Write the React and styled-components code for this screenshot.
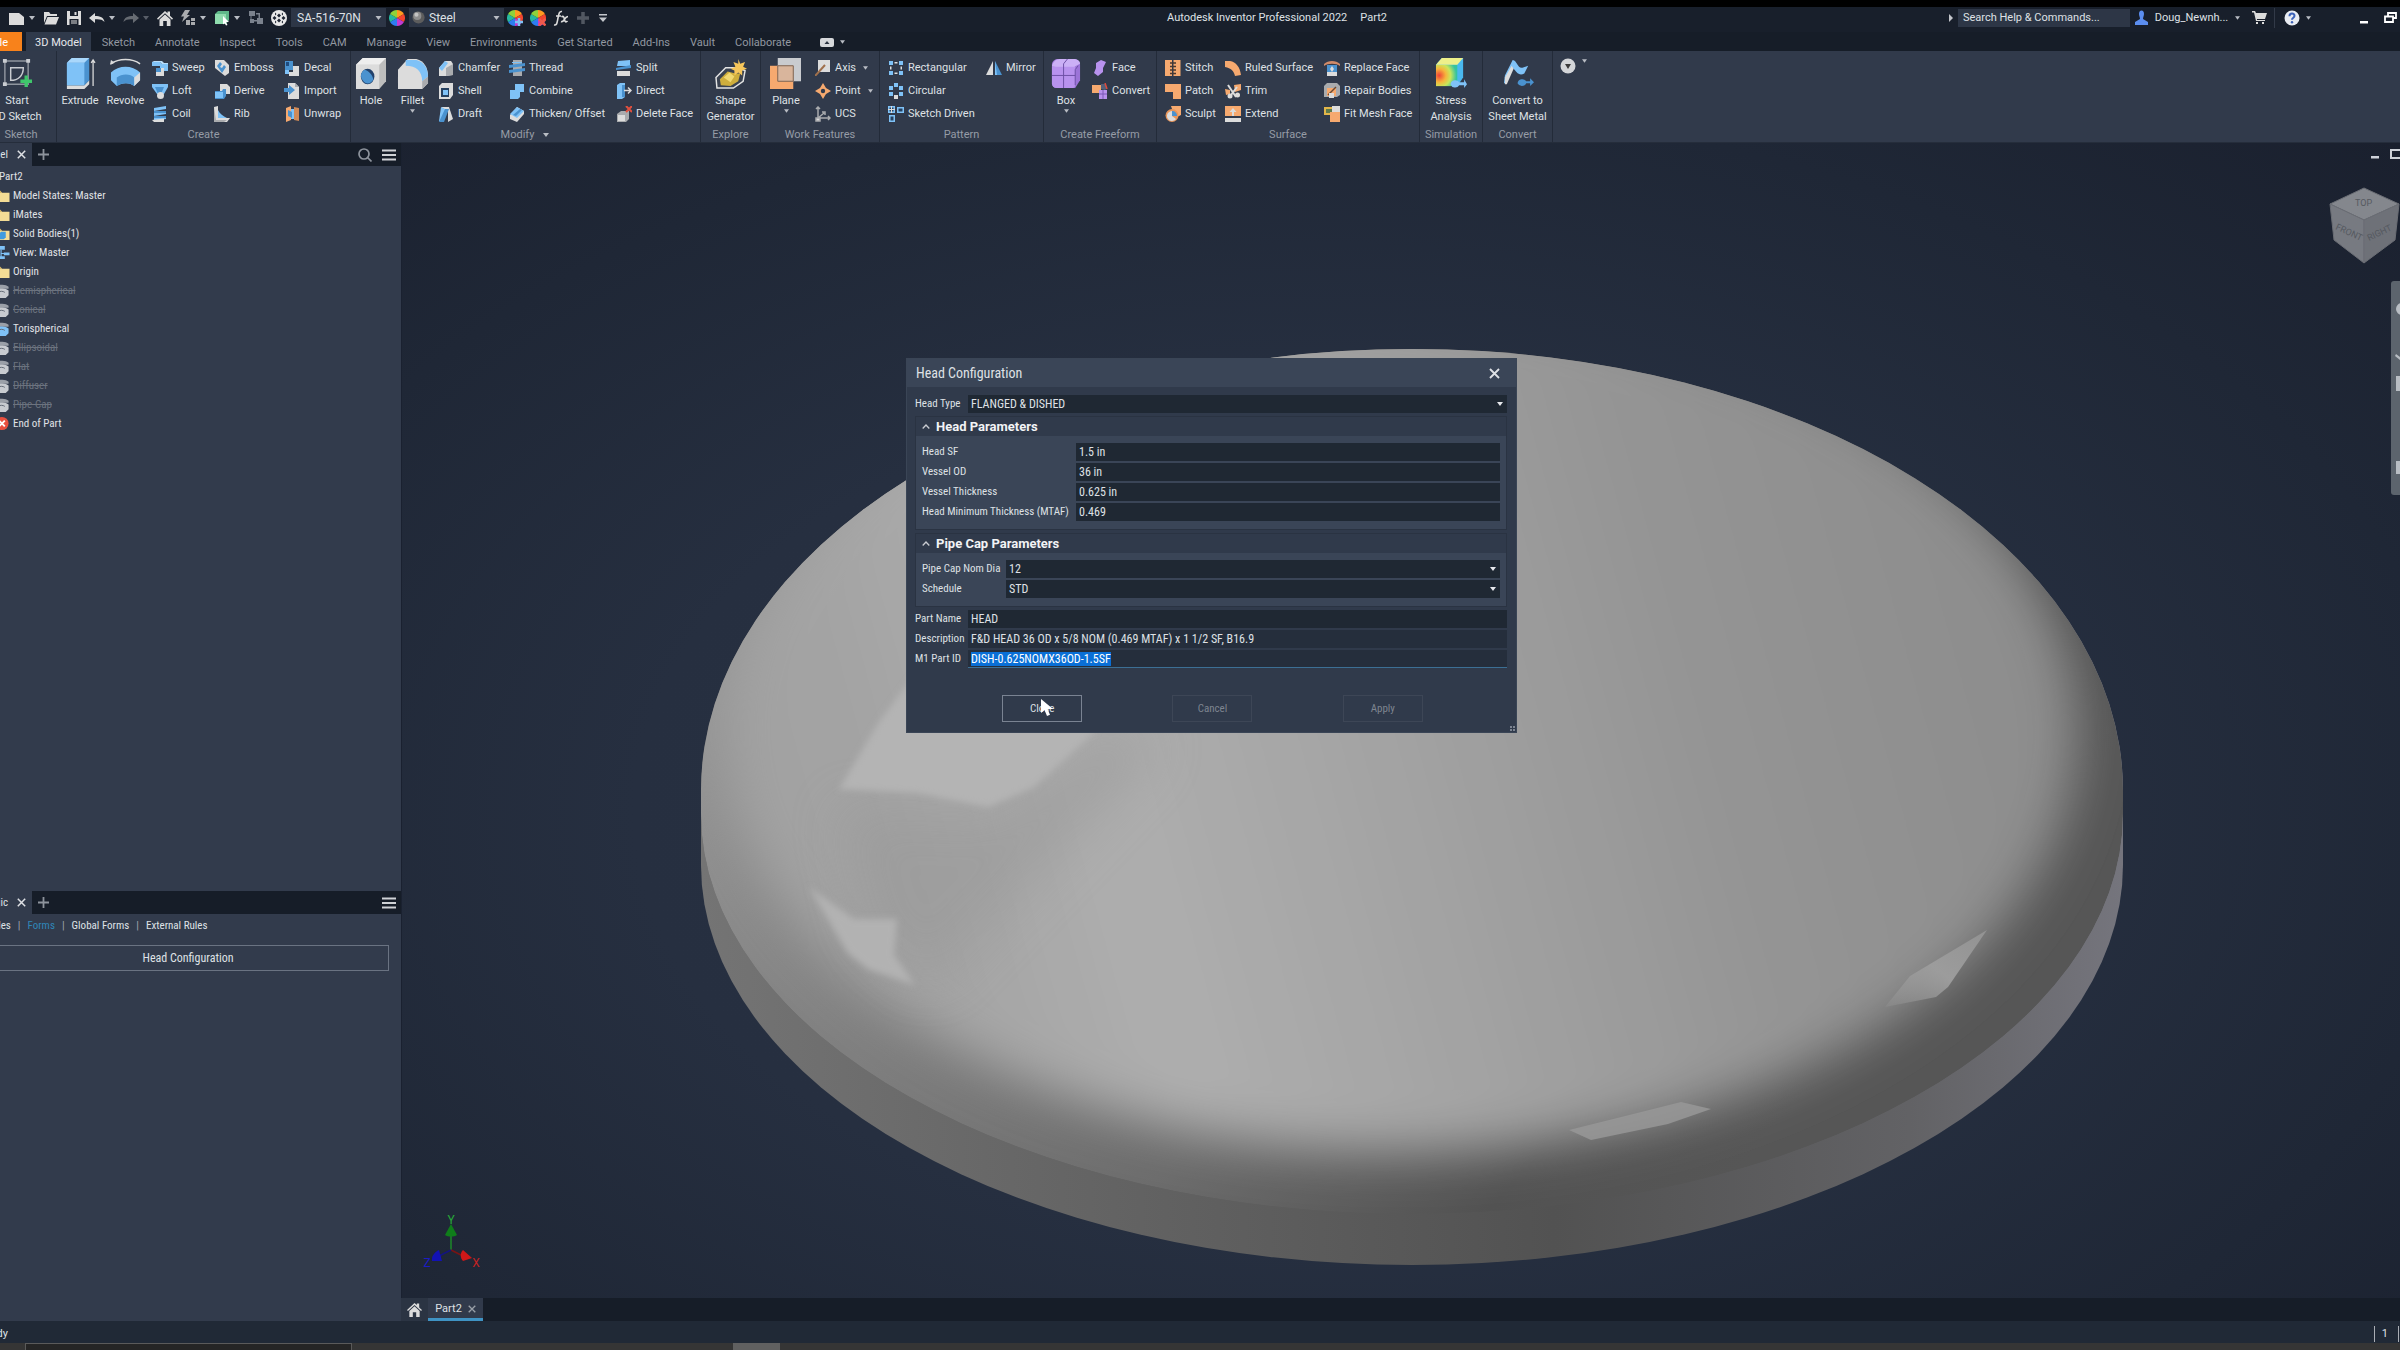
import React, { useEffect, useRef } from "react";
import styled, { createGlobalStyle } from "styled-components";

const ui = `Roboto, "Liberation Sans", sans-serif`;
const narrow = `"Roboto Condensed", "Liberation Sans Narrow", Roboto, sans-serif`;

const GlobalStyle = createGlobalStyle`
  * {
    box-sizing: border-box;
  }
  body {
    margin: 0;
    background: #000;
    color: #dfe1e5;
    font: 11px/16px ${ui};
    overflow: hidden;
  }
  button, input, select {
    font: inherit;
    color: inherit;
    margin: 0;
    padding: 0;
    border: none;
    border-radius: 0;
    background: none;
    outline: none;
  }
  svg {
    display: block;
    flex: none;
  }
`;

const Screen = styled.div`
  height: 100vh;
  overflow: hidden;
  padding-top: 7px;
`;

/* the window hangs a little over the left edge of the screen */
const Window = styled.div`
  height: 100%;
  margin-left: -14px;
  display: flex;
  flex-direction: column;
`;

const TitleBar = styled.header`
  display: flex;
  align-items: center;
  height: 25px;
  padding: 0 2px 4px 20px;
  background: #181f2b;
`;

const ToolButton = styled.button`
  display: flex;
  align-items: center;
  gap: 4px;
  width: ${(props) => (props.$menu ? "34px" : "23px")};
  height: 20px;
  padding-left: 3px;
  opacity: ${(props) => (props.disabled ? 0.4 : 1)};
`;

const Combo = styled.div`
  position: relative;
  display: flex;
  align-items: center;
  width: 95px;
  height: 19px;
  padding-left: ${(props) => (props.$icon ? "3px" : "0")};
  background: #2d3646;
`;

const ComboSelect = styled.select`
  appearance: none;
  flex: 1;
  min-width: 0;
  height: 100%;
  padding-left: ${(props) => (props.$tight ? "4px" : "6px")};
  font-size: 12px;
`;

const ComboArrow = styled.span`
  position: absolute;
  right: 4px;
  top: 50%;
  margin-top: -2px;
  pointer-events: none;
`;

const Title = styled.div`
  flex: 1;
  display: flex;
  justify-content: center;
  gap: 13px;
  white-space: nowrap;
`;

const Search = styled.input`
  width: 172px;
  height: 18px;
  padding-left: 5px;
  background: #2d3646;
  &::placeholder {
    color: #dfe1e5;
    opacity: 1;
  }
`;

const User = styled.button`
  display: flex;
  align-items: center;
  justify-content: space-between;
  width: 114px;
  padding: 0 4px 0 5px;
`;

const Divider = styled.span`
  width: 1px;
  height: 20px;
  background: #323a48;
`;

const Slot = styled.button`
  display: flex;
  align-items: center;
  justify-content: center;
  gap: 6px;
  width: ${(props) => props.$w}px;
  height: 20px;
  margin-left: ${(props) => props.$before || 0}px;
`;

const Tabs = styled.nav`
  display: flex;
  align-items: stretch;
  gap: 2px;
  height: 19px;
  background: #161d28;
`;

const FileTab = styled.button`
  width: 36px;
  margin-right: 2px;
  padding: 2px 14px 0 0;
  text-align: right;
  background: #f8821b;
  color: #fff;
`;

const Tab = styled.button`
  padding: 2px 9px 0;
  background: ${(props) => (props.$active ? "#303a4b" : "transparent")};
  color: ${(props) => (props.$active ? "#e6e8ec" : "#9298a1")};
`;

const Ribbon = styled.section`
  display: flex;
  height: 92px;
  background: #313a4b;
  border-bottom: 1px solid #252d3b;
`;

const Panel = styled.div`
  display: flex;
  flex-direction: column;
  flex: none;
  width: ${(props) => props.$w}px;
  height: 91px;
  padding-top: 5px;
  border-right: 1px solid #232b39;
`;

const PanelBody = styled.div`
  display: flex;
  flex: 1;
  padding-left: ${(props) => props.$pad || 0}px;
`;

const PanelLabel = styled.div`
  display: flex;
  justify-content: center;
  align-items: center;
  gap: 8px;
  height: 14px;
  color: #969ca6;
`;

const BigButton = styled.button`
  display: flex;
  flex-direction: column;
  align-items: center;
  flex: none;
  width: ${(props) => props.$w}px;
  padding-top: 2px;
  white-space: nowrap;
  & > svg:first-child {
    margin-bottom: 3px;
  }
`;

const Column = styled.div`
  flex: none;
  width: ${(props) => props.$w}px;
  padding-left: 4px;
`;

const SmallButton = styled.button`
  display: flex;
  align-items: center;
  gap: 4px;
  height: 23px;
  white-space: nowrap;
`;

const SmallLabel = styled.span`
  margin-right: 3px;
`;

const Main = styled.div`
  flex: 1;
  min-height: 0;
  display: flex;
`;

const Dock = styled.aside`
  display: flex;
  flex-direction: column;
  width: 415px;
  flex: none;
  background: #323b4c;
  font-family: ${narrow};
`;

const DockBar = styled.div`
  display: flex;
  align-items: center;
  height: 23px;
  padding-right: 1px;
  background: #161d28;
`;

const DockTab = styled.div`
  display: flex;
  justify-content: flex-end;
  align-items: center;
  gap: 9px;
  width: 46px;
  height: 100%;
  padding-right: 6px;
  background: #323b4c;
`;

const Spacer = styled.span`
  flex: 1;
`;

const Tree = styled.ul`
  flex: 1;
  margin: 0;
  padding: 1px 0 0 8px;
  list-style: none;
`;

const TreeItem = styled.li`
  display: flex;
  align-items: center;
  gap: 3px;
  height: 19px;
  padding-left: ${(props) => (props.$root ? "5px" : "0")};
  color: ${(props) => (props.$off ? "#6c737f" : "#e0e2e6")};
  text-decoration: ${(props) => (props.$off ? "line-through" : "none")};
`;

const FormsPane = styled.div`
  height: 407px;
  padding: 4px 12px 0 1px;
`;

const FormTabs = styled.div`
  display: flex;
  height: 16px;
  gap: 7px;
  color: #a0a6b0;
`;

const FormTab = styled.button`
  color: ${(props) => (props.$active ? "#2f86b8" : "#dfe1e5")};
`;

const FormButton = styled.button`
  width: 100%;
  height: 26px;
  margin-top: 11px;
  border: 1px solid #6a7382;
  font-size: 12px;
`;

const Work = styled.main`
  flex: 1;
  min-width: 0;
  display: flex;
  flex-direction: column;
`;

const Viewport = styled.div`
  position: relative;
  flex: 1;
  min-height: 0;
  overflow: hidden;
  border-left: 1px solid #1a2130;
  background: radial-gradient(
    ellipse at 46% 58%,
    #293243 0%,
    #262f40 45%,
    #1f2736 75%,
    #1a202e 100%
  );
`;

const Scene = styled.svg`
  width: 100%;
  height: 100%;
`;

const DocTabs = styled.div`
  display: flex;
  height: 23px;
  background: #161d28;
`;

const HomeTab = styled.button`
  width: 27px;
  padding-left: 6px;
  background: #2b3443;
`;

const DocTab = styled.div`
  display: flex;
  align-items: center;
  justify-content: center;
  gap: 6px;
  width: 55px;
  padding-top: 2px;
  background: #313a4b;
  border-bottom: 3px solid #3f93c4;
  white-space: nowrap;
`;

const StatusBar = styled.footer`
  display: flex;
  align-items: center;
  justify-content: space-between;
  height: 22px;
  padding: 4px 0 0 0;
  background: #202936;
`;

const StatusText = styled.span`
  width: 22px;
  display: flex;
  justify-content: flex-end;
`;

const StatusCount = styled.span`
  padding: 0 10px 0 7px;
  margin-right: 1px;
  border: solid #a9adb4;
  border-width: 0 1px;
`;

const Taskbar = styled.div`
  display: flex;
  height: 7px;
  padding-left: 39px;
  background: #353535;
`;

const TaskSearch = styled.div`
  width: 327px;
  margin-right: 381px;
  background: #252525;
  border: 1px solid #5a5a5a;
  border-bottom: none;
`;

const TaskActive = styled.div`
  width: 47px;
  background: #606060;
`;

const Dialog = styled.form`
  position: absolute;
  left: 505px;
  top: 216px;
  width: 609px;
  background: #303a4b;
  font-family: ${narrow};
  box-shadow: 0 0 0 1px #3a4556;
`;

const DialogTitle = styled.div`
  display: flex;
  align-items: center;
  justify-content: space-between;
  height: 28px;
  padding: 0 16px 0 9px;
  background: #3a4557;
  font-size: 14px;
`;

const DialogBody = styled.div`
  padding: 8px 9px 10px 8px;
`;

const Field = styled.div`
  display: grid;
  grid-template-columns: ${(props) => props.$label}px 1fr;
  align-items: center;
  height: 18px;
  margin-bottom: 2px;
  white-space: nowrap;
`;

const TextInput = styled.input`
  width: 100%;
  height: 18px;
  padding-left: 3px;
  background: ${(props) => (props.$soft ? "#252e3c" : "#1f2833")};
  border-bottom: ${(props) => (props.$focus ? "1px solid #3c6f94" : "none")};
  font-size: 12px;
  caret-color: transparent;
  &::selection {
    background: #0a6fd6;
    color: #fff;
  }
`;

const Choice = styled.div`
  position: relative;
  height: 18px;
  background: #1f2833;
`;

const ChoiceSelect = styled.select`
  appearance: none;
  width: 100%;
  height: 18px;
  padding-left: 3px;
  font-size: 12px;
`;

const Group = styled.section`
  margin: 3px 0;
  border: 1px solid #2a3342;
`;

const GroupHead = styled.button`
  display: flex;
  align-items: center;
  gap: 6px;
  width: 100%;
  height: 19px;
  padding-left: 6px;
  font: 700 13px/16px ${ui};
  color: #f2f3f5;
`;

const GroupBody = styled.div`
  padding: 7px 6px 6px;
  background: #3a4557;
`;

const Buttons = styled.div`
  display: grid;
  grid-template-columns: repeat(3, 1fr);
  justify-items: center;
  padding: 25px 39px 0 42px;
`;

const DialogButton = styled.button`
  width: 80px;
  height: 27px;
  border: 1px solid ${(props) => (props.disabled ? "#3d4656" : "#7a8392")};
  color: ${(props) => (props.disabled ? "#7e8590" : "#dfe1e5")};
`;

const Pointer = styled.svg`
  position: absolute;
  left: 134px;
  top: 340px;
`;

const Grip = styled.svg`
  position: absolute;
  right: 0;
  bottom: 0;
`;

const B = "#7fc2f7";
const D = "#4a92cf";
const W = "#dcdcdc";
const G = "#a9abae";
const O = "#f6a96f";
const P = "#b892ee";

const Down = ({ s = 6, c = "#b9bdc4" }) => (
  <svg width={s} height="4" viewBox="0 0 6 4">
    <path d="M0 0h6L3 4z" fill={c} />
  </svg>
);

const Close = ({ s = 9, c = "#dfe1e5" }) => (
  <svg width={s} height={s} viewBox="0 0 9 9">
    <path d="M.8.8l7.4 7.4M8.2.8L.8 8.2" stroke={c} strokeWidth="1.5" />
  </svg>
);

const Plus = () => (
  <svg width="11" height="11" viewBox="0 0 11 11">
    <path d="M5.5 0v11M0 5.5h11" stroke="#8d939c" strokeWidth="1.8" />
  </svg>
);

const Menu = () => (
  <svg width="14" height="12" viewBox="0 0 14 12">
    <path d="M0 1.5h14M0 6h14M0 10.500h14" stroke="#cfd2d6" strokeWidth="2.2" />
  </svg>
);

const Chevron = () => (
  <svg width="8" height="5" viewBox="0 0 8 5">
    <path d="M.7 4.500L4 1l3.300 3.500" stroke="#c9ccd1" strokeWidth="1.300" fill="none" />
  </svg>
);

const wheel = (
  <g>
    <path d="M8 8V0a8 8 0 0 1 6.900 4z" fill="#ff9a1f" />
    <path d="M8 8l6.900-4a8 8 0 0 1 0 8z" fill="#f2452e" />
    <path d="M8 8l6.900 4A8 8 0 0 1 8 16z" fill="#c23ad0" />
    <path d="M8 8v8a8 8 0 0 1-6.900-4z" fill="#2d7df0" />
    <path d="M8 8l-6.900 4a8 8 0 0 1 0-8z" fill="#27b8a0" />
    <path d="M8 8L1.100 4A8 8 0 0 1 8 0z" fill="#8fd23a" />
  </g>
);

const house = (
  <g>
    <path d="M0 8.500L8 1l2.500 2.300V1.500H13v4.300l3 2.700-1 1.200-7-6.500-7 6.500z" fill={W} />
    <path d="M2.500 9.500L8 4.600l5.500 4.900V16h-3.700v-5H6.200v5H2.500z" fill={W} />
  </g>
);

const icons = {
  new: <path d="M0 3h10l5 4v8H0z" fill={W} />,
  open: (
    <g fill={W}>
      <path d="M1 2h5l1.500 2H14v2H4L1 13z" />
      <path d="M4.500 7H16l-3 7.500H1.500z" />
    </g>
  ),
  save: (
    <g>
      <path d="M1 1h14v14H1z" fill={W} />
      <path d="M4 1h8v5H4zM3.500 9h9v6h-9z" fill="#181f2b" />
      <path d="M8.500 2h2v3h-2zM5 10.500h6v1H5zM5 12.500h6v1H5z" fill={W} />
    </g>
  ),
  undo: <path d="M0 8l6-5v3c5 0 9 1.500 9.500 6-2-2.500-5-3-9.500-2.700V13z" fill={W} />,
  redo: <path d="M16 8l-6-5v3C5 6 1 7.500.5 12c2-2.500 5-3 9.500-2.700V13z" fill={W} />,
  home: house,
  update: (
    <g fill={G}>
      <path d="M5 0h5L7 5h3L2 12l2-5.500H1z" />
      <path d="M6 10h4v5H6zM11 8h4v3h-4zM11 12h4v3h-4z" />
    </g>
  ),
  select: (
    <g>
      <path d="M1 4l3-3h11v9l-3 4H1z" fill="#5fb98a" />
      <path d="M1 4h11v10H1z" fill="#8fdcae" />
      <path d="M9 6l6 6h-3l1.500 3-1.500.6L10.500 13 9 14.500z" fill="#fff" />
    </g>
  ),
  links: (
    <g fill="#7b828d">
      <path d="M1 1h6v5H1zM9 8h6v6H9zM2 9h4v4H2z" />
      <path d="M3.500 6v4H9v1.500H2.500V6zM8 3h4v5h-1.500V4.500H8z" />
    </g>
  ),
  material: (
    <g>
      <circle cx="8" cy="8" r="8" fill="#e8e8e8" />
      <path
        d="M8 3.500l2 2-2 2-2-2zM8 8.500l2 2-2 2-2-2zM3.500 6L5.500 8l-2 2-2-2zM12.500 6l2 2-2 2-2-2zM4 2.500l1.500 1.500L4 5.500zM12 2.500L10.500 4 12 5.500zM4 13.500L5.500 12 4 10.500zM12 13.500L10.500 12l1.500-1.500z"
        fill="#1d2431"
      />
    </g>
  ),
  wheel,
  wheelAdd: (
    <g>
      {wheel}
      <path d="M12 8v8M8 12h8" stroke="#7fc2f7" strokeWidth="2.500" />
    </g>
  ),
  wheelDel: (
    <g>
      {wheel}
      <path d="M9 9l6.500 6.500M15.500 9L9 15.500" stroke="#ef5a4a" strokeWidth="2.500" />
    </g>
  ),
  plus: <path d="M7 2v12M1 8h12" stroke="#a8acb3" strokeWidth="3.500" />,
  sphere: (
    <g>
      <circle cx="8" cy="8" r="7.500" fill="#5d5d5d" />
      <circle cx="6.500" cy="6" r="5" fill="#8e8e8e" />
      <circle cx="5.500" cy="4.500" r="2.500" fill="#c4c4c4" />
    </g>
  ),
  sweep: (
    <g>
      <path d="M0 2h8l2 2h6v7h-4V8H8V6H0z" fill={B} />
      <path d="M0 2l2-1h8l2 2h4v1h-6L8 2z" fill="#b9defa" />
      <path d="M4 8h8v8H4z" fill={W} />
      <path d="M4 8h5v4H4z" fill={D} />
    </g>
  ),
  loft: (
    <g>
      <path d="M0 1h16v3l-4 7H5L0 4z" fill={B} />
      <path d="M3 4h9l-3 7H6z" fill={D} />
      <circle cx="8.500" cy="12.500" r="3.500" fill={W} />
    </g>
  ),
  coil: (
    <g fill={B}>
      <path d="M2 2l12-2v3L2 5zM2 7l12-2v3L2 10zM2 12l12-2v3L2 15z" />
      <path d="M2 5l12 0v2L2 7zM2 10h12v2H2z" fill={D} />
      <path d="M0 14l12-1.500V16H2z" fill={W} />
    </g>
  ),
  emboss: (
    <g>
      <path d="M1 0h9l5 5v8l-4 3-10-8z" fill={W} />
      <path d="M3 6l3-4 2 2-2 3 2 1 2-3 2 2-4 6z" fill={D} />
    </g>
  ),
  derive: (
    <g>
      <path d="M6 1h7l3 3v7H6z" fill={W} />
      <path d="M1 8h7l1-2h3v7l-2 3H1z" fill={D} />
      <path d="M1 9h8v6H1z" fill={B} />
    </g>
  ),
  rib: (
    <g>
      <path d="M0 1l4-1v12h12l-3 4H0z" fill={W} />
      <path d="M4 4c2 4 5 6 9 8H4z" fill={B} />
      <path d="M0 1l2 13h11l-3 2H0z" fill={G} />
    </g>
  ),
  decal: (
    <g>
      <path d="M1 1h8v9H1z" fill={D} />
      <path d="M2 2h3v4H2z" fill="#1f4c80" />
      <path d="M9 6h6v10H5v-4h4z" fill={W} />
      <path d="M1 10h4v4H1z" fill={B} />
    </g>
  ),
  import: (
    <g>
      <path d="M4 0h7l4 4v12H4z" fill={W} />
      <path d="M11 0v4h4z" fill={G} />
      <path d="M0 5h5V2l6 5-6 5V9H0z" fill={D} />
    </g>
  ),
  unwrap: (
    <g>
      <path d="M2 2l5-2v14l-5 2z" fill={O} />
      <path d="M7 3h3v10H7z" fill={B} />
      <path d="M10 1l5 1v13l-5-1z" fill="#d08a58" />
      <path d="M4 4l4 2v6l-4-2z" fill={D} />
    </g>
  ),
  chamfer: (
    <g>
      <path d="M1 8l6-7h6l2 3v11l-7 1H1z" fill={W} />
      <path d="M1 8l6-7 3 2-6 8z" fill={B} />
      <path d="M8 8l7-4v11l-7 1z" fill={G} />
    </g>
  ),
  shell: (
    <g>
      <path d="M1 3l3-3h11v12l-3 4H1z" fill={W} />
      <path d="M3 5h8v9H3z" fill="#26405f" />
      <path d="M5 7h5v5H5z" fill={B} />
    </g>
  ),
  draft: (
    <g>
      <path d="M3 1h8l4 12-5 3V6z" fill={W} />
      <path d="M1 15L3 1l4 2 1 5-4 7z" fill={B} />
      <path d="M7 3h4l-5 13H1z" fill={D} />
    </g>
  ),
  thread: (
    <g>
      <path d="M4 0h9v16H4z" fill={G} />
      <path d="M0 5l16-2v3L0 8zM0 10l16-2v3L0 13z" fill={D} />
      <path d="M3 2h10v1H3z" fill={B} />
    </g>
  ),
  combine: <path d="M6 1h9v8h-4v5l-2 2H1V7h5z" fill={B} />,
  thicken: (
    <g>
      <path d="M1 9l7-8 7 4v3l-7 8-7-3z" fill={W} />
      <path d="M1 8l7-7 7 4-7 7z" fill={B} />
      <path d="M4 9l7-6 2 1-6 6z" fill={D} />
    </g>
  ),
  split: (
    <g>
      <path d="M2 1l12-1v6H1z" fill={B} />
      <path d="M0 8l15-3v3L0 10z" fill={D} />
      <path d="M1 11h13v5H1z" fill={W} />
    </g>
  ),
  direct: (
    <g>
      <path d="M1 2l3-2h5v14l-3 2H1z" fill={B} />
      <path d="M6 2h3v12H6z" fill={D} />
      <path d="M8 7.500h6M12 4.500l3 3-3 3" stroke={W} strokeWidth="1.500" fill="none" />
    </g>
  ),
  deleteFace: (
    <g>
      <path d="M1 8l4-3h8v8l-3 3H1z" fill={G} />
      <path d="M2 9h7v6H2z" fill={W} />
      <path d="M10 0l6 6M16 0l-6 6" stroke="#e0503f" strokeWidth="2" />
    </g>
  ),
  axis: (
    <g>
      <path d="M3 0h12v12H3z" fill={W} />
      <path d="M0 16L10 5" stroke="#a0704c" strokeWidth="2" />
    </g>
  ),
  point: (
    <g>
      <path d="M8 0l3 5 5 3-5 3-3 5-3-5-5-3 5-3z" fill={O} />
      <circle cx="8" cy="8" r="2.200" fill="#303a4b" />
    </g>
  ),
  ucs: (
    <g stroke={G} fill="none" strokeWidth="1.500">
      <path d="M3 1v11h12M3 12l6-5M1 3l2-2 2 2M13 10l2 2-2 2M7 6h3v3" />
      <path d="M1 12h4v3H1z" fill={W} />
    </g>
  ),
  rect: (
    <g fill={B}>
      <path d="M1 1h4v4H1zM11 1h4v4h-4zM1 11h4v4H1zM11 11h4v4h-4z" />
      <path d="M6.500 2h3v1.500h-3zM6.500 12.500h3V14h-3zM2 6.500h1.500v3H2zM12.500 6.500H14v3h-1.500z" fill={W} />
    </g>
  ),
  circ: (
    <g fill={B}>
      <path d="M6 0h4v4H6zM1 3h4v4H1zM11 3h4v4h-4zM1 9h4v4H1zM11 9h4v4h-4z" />
      <path d="M6 12h4v4H6z" fill={W} />
    </g>
  ),
  sketchDriven: (
    <g>
      <path d="M0 0h7v7H0zM9 1h7v6H9zM1 9h6v7H1z" fill={B} />
      <path d="M1.500 1.500h4v4h-4zM10.500 2.500h4v3h-4zM2.500 10.500h3v4h-3z" fill="#26405f" />
      <path d="M3 0h1v7H3zM0 3h7v1H0z" fill={W} />
    </g>
  ),
  mirror: (
    <g>
      <path d="M7 1v14H0z" fill={W} />
      <path d="M9 1l7 14H9z" fill={D} />
      <path d="M9 1v14h2z" fill={B} />
    </g>
  ),
  face: <path d="M4 3l5-3 5 2-3 6 0 4-5 4-4-3 2-5z" fill={P} />,
  convert: (
    <g>
      <path d="M0 2h9v8H0z" fill={O} />
      <path d="M7 7h8v9H7z" fill={P} />
      <path d="M9 1h4l2 4-2 2-4-1z" fill="#54617a" />
      <path d="M13 0l2 6" stroke="#e04a3a" strokeWidth="1.500" />
      <path d="M11 7v9M7 11h8" stroke="#7a58b8" strokeWidth="1" />
    </g>
  ),
  stitch: (
    <g>
      <path d="M0 0h7v16H0zM8.500 0h7v16h-7z" fill={O} />
      <path d="M5 3h6M5 6.500h6M5 10h6M5 13.500h6" stroke="#4a3830" strokeWidth="1.500" />
    </g>
  ),
  patch: <path d="M0 1h16v15H8V9H0z" fill={O} />,
  sculpt: (
    <g>
      <path d="M6 0h10v9l-6 3z" fill={O} />
      <circle cx="7" cy="9.500" r="6.500" fill="#e8955a" />
      <path d="M7 5a5 5 0 1 0 4 8L7 10z" fill={W} />
      <path d="M7 5c3 0 5 2 5 5H7z" fill={D} />
    </g>
  ),
  ruled: <path d="M0 1h5c6 1 10 6 11 14l-6 1C9 11 6 8 0 7z" fill={O} />,
  trim: (
    <g>
      <path d="M9 2l7-1v6l-6 2zM0 6l5 1v4l-4 1z" fill={O} />
      <path d="M3 2l8 12M12 4L6 12" stroke={W} strokeWidth="2" />
      <circle cx="5" cy="13" r="2.500" fill={W} />
      <circle cx="12.500" cy="12" r="2.500" fill={W} />
    </g>
  ),
  extend: (
    <g>
      <path d="M0 0h16v10H0z" fill={O} />
      <path d="M0 12h16v4H0z" fill={W} />
      <path d="M8 2l3.500 4H9v4H7V6H4.500z" fill={W} />
    </g>
  ),
  replace: (
    <g>
      <path d="M0 4c4-4 12-4 16 0v2c-4-3-12-3-16 0z" fill="#d08a68" />
      <path d="M3 5h10v9H3z" fill={D} />
      <path d="M3 12h10v4H3z" fill={W} />
      <path d="M8 6l2 3-2 3-2-3z" fill={W} />
    </g>
  ),
  repair: (
    <g>
      <path d="M0 3l3-3h10l3 3v9l-3 2H0z" fill={G} />
      <path d="M3 5h9v8H3z" fill={O} />
      <path d="M4 12L12 4" stroke="#6a4a34" strokeWidth="1.500" />
      <path d="M5 10h5v5H5z" fill={W} />
    </g>
  ),
  fitMesh: (
    <g>
      <path d="M0 1h8v8H0z" fill="#e2b64a" />
      <path d="M8 0h8v8H8z" fill={W} />
      <path d="M2 3h6v4H2z" fill="#5f7a4c" />
      <path d="M6 6h10v10H6z" fill={O} />
    </g>
  ),
};

const Icon = ({ name, size = 16 }) => (
  <svg width={size} height={size} viewBox="0 0 16 16">
    {icons[name]}
  </svg>
);

const bigIcons = {
  sketch: (
    <g fill="none" stroke="#c9ccd1" strokeWidth="1.500">
      <path d="M4 3h24v24H4z" stroke="#8f959e" />
      <path d="M10 10h13c0 8-5 13-13 13z" />
      <path d="M2 1h4v4H2zM26 1h4v4h-4zM2 25h4v4H2z" fill="#c9ccd1" stroke="none" />
      <path d="M26 18v12M20 24h12" stroke="#3fc66b" strokeWidth="3.500" />
    </g>
  ),
  extrude: (
    <g>
      <path d="M3 28h18l5-5v4l-5 5H3z" fill={W} />
      <path d="M3 5l5-5h18v23l-5 5H3z" fill={D} />
      <path d="M3 5h18v23H3z" fill={B} />
      <path d="M3 5l5-5h18l-5 5z" fill="#a9d7fb" />
      <path d="M30 3v26M28 5l2-3 2 3" stroke={W} strokeWidth="1.300" fill="none" />
    </g>
  ),
  revolve: (
    <g>
      <path d="M1 6c8-6 22-6 30 0" stroke={W} strokeWidth="1.500" fill="none" />
      <path d="M0 7l1-5 4 3z" fill={W} />
      <path d="M1 15c8-8 22-8 30 0v8l-6 6c-4-4-13-4-18 0l-6-6z" fill={B} />
      <path d="M7 20c5-4 14-4 18 0v9c-4-4-13-4-18 0z" fill={D} />
      <path d="M25 20l6-5v8l-6 6z" fill={W} />
    </g>
  ),
  hole: (
    <g>
      <path d="M1 7l7-7h24v24l-7 8H1z" fill="#bdbdbd" />
      <path d="M1 7h24v25H1z" fill={W} />
      <path d="M1 7l7-7h24l-7 7z" fill="#eee" />
      <ellipse cx="13" cy="19" rx="7" ry="8" fill="#22416b" />
      <path d="M10 12c4 1 8 5 9 10-2 5-8 6-11 1-3-4-2-9 2-11z" fill={D} />
    </g>
  ),
  fillet: (
    <g>
      <path d="M1 12L11 1h9c8 2 12 9 12 18v7l-6 6H1z" fill={W} />
      <path d="M9 2h11c8 2 12 9 12 17l-6 5c0-10-6-16-17-16z" fill={B} />
      <path d="M26 24l6-5v7l-6 6z" fill={G} />
    </g>
  ),
  shape: (
    <g>
      <path d="M1 20l10-10h12l8 3-2 11-10 7H2z" fill="#3a4250" stroke="#e4e4e4" strokeWidth="1.500" />
      <path d="M5 22l8-8 8 2 5 0-2 8-8 5-10-1z" fill="#cfae3c" />
      <path d="M9 20l6-5 5 4-4 6z" fill="#f1d870" />
      <path d="M24 1l2 5 5-2-2 5 4 2-5 2 0 5-4-3-4 3v-5l-4-2 5-2-2-5 5 2z" fill="#f6c65b" />
    </g>
  ),
  plane: (
    <g>
      <path d="M8 0h24v24H8z" fill="#c9cbcf" />
      <path d="M0 8h24v24H0z" fill={O} />
      <path d="M8 8h16v16H8z" fill="#d9b59c" stroke="#7a6253" strokeWidth="1" />
    </g>
  ),
  box: (
    <g>
      <path d="M2 7c0-4 3-6 7-6h15c4 0 7 2 7 6v16l-5 8H7c-3 0-5-2-5-5z" fill="#9c74d8" />
      <path d="M2 9c0-2 2-3 4-3h16c2 0 4 1 4 3v18c0 3-1 4-4 4H7c-3 0-5-2-5-5z" fill={P} />
      <path d="M2 8c1-4 4-7 8-7h14c4 0 7 2 7 5l-6 3H6z" fill="#cbb0f6" />
      <path d="M14 6v25M2 18h24M26 12v16M29 8l-3 4M18 1l-4 5" stroke="#6d4fa5" strokeWidth="1" fill="none" />
    </g>
  ),
  stress: (
    <g>
      <defs>
        <radialGradient id="heat" cx="0.15" cy="0.5" r="0.9">
          <stop offset="0" stopColor="#ef4238" />
          <stop offset="0.35" stopColor="#f7b53c" />
          <stop offset="0.6" stopColor="#c9e65a" />
          <stop offset="0.9" stopColor="#35c3a0" />
        </radialGradient>
      </defs>
      <path d="M1 7l6-7h22v20l-6 9H1z" fill="#4ab8ef" />
      <path d="M1 7h22v22H1z" fill="url(#heat)" />
      <path d="M1 7l6-7h22l-6 7z" fill="#eef08a" />
      <path d="M16 27a5 5 0 0 1 9-2h5v-3l3 5-3 4v-3h-5a5 5 0 0 1-9-1z" fill={B} />
    </g>
  ),
  sheet: (
    <g>
      <path d="M3 18L11 2c5 1 5 9 10 8l6-2-4 8c-6 3-8-2-12-6L4 26H2z" fill={B} />
      <path d="M3 20L10 8l2 3L5 27H3z" fill={W} />
      <path d="M16 26a5 5 0 0 1 9-2h4v-3l4 4-4 4v-3h-4a5 5 0 0 1-9 0z" fill={D} />
    </g>
  ),
};

const BigIcon = ({ name }) => (
  <svg width="32" height="32" viewBox="0 0 33 33">
    {bigIcons[name]}
  </svg>
);

const panels = [
  {
    label: "Sketch",
    w: 71,
    big: [{ icon: "sketch", w: 62, text: ["Start", "2D Sketch"] }],
  },
  {
    label: "Create",
    w: 294,
    big: [
      { icon: "extrude", w: 46, text: ["Extrude"] },
      { icon: "revolve", w: 45, text: ["Revolve"] },
    ],
    cols: [
      { w: 62, items: [["sweep", "Sweep"], ["loft", "Loft"], ["coil", "Coil"]] },
      { w: 70, items: [["emboss", "Emboss"], ["derive", "Derive"], ["rib", "Rib"]] },
      { w: 70, items: [["decal", "Decal"], ["import", "Import"], ["unwrap", "Unwrap"]] },
    ],
  },
  {
    label: "Modify",
    menu: true,
    w: 350,
    big: [
      { icon: "hole", w: 40, text: ["Hole"] },
      { icon: "fillet", w: 43, text: ["Fillet"], menu: true },
    ],
    cols: [
      { w: 71, items: [["chamfer", "Chamfer"], ["shell", "Shell"], ["draft", "Draft"]] },
      { w: 107, items: [["thread", "Thread"], ["combine", "Combine"], ["thicken", "Thicken/ Offset"]] },
      { w: 88, items: [["split", "Split"], ["direct", "Direct"], ["deleteFace", "Delete Face"]] },
    ],
  },
  {
    label: "Explore",
    w: 60,
    big: [{ icon: "shape", w: 59, text: ["Shape", "Generator"] }],
  },
  {
    label: "Work Features",
    w: 119,
    big: [{ icon: "plane", w: 50, text: ["Plane"], menu: true }],
    cols: [{ w: 68, items: [["axis", "Axis", true], ["point", "Point", true], ["ucs", "UCS"]] }],
  },
  {
    label: "Pattern",
    w: 164,
    pad: 4,
    cols: [
      { w: 98, items: [["rect", "Rectangular"], ["circ", "Circular"], ["sketchDriven", "Sketch Driven"]] },
      { w: 61, items: [["mirror", "Mirror"]] },
    ],
  },
  {
    label: "Create Freeform",
    w: 113,
    big: [{ icon: "box", w: 44, text: ["Box"], menu: true }],
    cols: [{ w: 68, items: [["face", "Face"], ["convert", "Convert"]] }],
  },
  {
    label: "Surface",
    w: 263,
    pad: 4,
    cols: [
      { w: 60, items: [["stitch", "Stitch"], ["patch", "Patch"], ["sculpt", "Sculpt"]] },
      { w: 99, items: [["ruled", "Ruled Surface"], ["trim", "Trim"], ["extend", "Extend"]] },
      { w: 99, items: [["replace", "Replace Face"], ["repair", "Repair Bodies"], ["fitMesh", "Fit Mesh Face"]] },
    ],
  },
  {
    label: "Simulation",
    w: 63,
    big: [{ icon: "stress", w: 62, text: ["Stress", "Analysis"] }],
  },
  {
    label: "Convert",
    w: 70,
    big: [{ icon: "sheet", w: 69, text: ["Convert to", "Sheet Metal"] }],
  },
];

const tabs = [
  "3D Model",
  "Sketch",
  "Annotate",
  "Inspect",
  "Tools",
  "CAM",
  "Manage",
  "View",
  "Environments",
  "Get Started",
  "Add-Ins",
  "Vault",
  "Collaborate",
];

const folder = (
  <g>
    <path d="M1 3h5l2 2h8v10H1z" fill="#f3dc95" />
    <path d="M1 3h5l2 2H1z" fill="#c9a95c" />
  </g>
);

const disc = (fill) => (
  <g>
    <path d="M1 4c4-3 11-3 14 0v2H1z" fill="#9ba0a8" />
    <path d="M1 8c4-3 11-3 14 0v5l-3 3H4l-3-2z" fill={fill} />
    <path d="M3 10c3-1.500 6-1.500 8 0" stroke="#5f6672" strokeWidth="1" fill="none" />
  </g>
);

const treeIcons = {
  folder,
  solids: (
    <g>
      {folder}
      <path d="M5 8l2-2h5v6l-2 2H5z" fill="#3f9be0" />
    </g>
  ),
  view: (
    <g>
      <path d="M5 1h6v4H5zM10 8h6v3h-6zM5 12h6v3H5z" fill={B} />
      <path d="M7 5v8M7 9h4" stroke={B} strokeWidth="1.200" />
    </g>
  ),
  off: disc("#c8cbd0"),
  on: disc(B),
  end: (
    <g>
      <circle cx="8" cy="8" r="7" fill="#e8503f" />
      <path d="M5 5l6 6M11 5l-6 6" stroke="#fff" strokeWidth="2" />
    </g>
  ),
};

const tree = [
  ["folder", "Model States: Master"],
  ["folder", "iMates"],
  ["solids", "Solid Bodies(1)"],
  ["view", "View: Master"],
  ["folder", "Origin"],
  ["off", "Hemispherical"],
  ["off", "Conical"],
  ["on", "Torispherical"],
  ["off", "Ellipsoidal"],
  ["off", "Flat"],
  ["off", "Diffuser"],
  ["off", "Pipe-Cap"],
  ["end", "End of Part"],
];

const Header = () => (
  <TitleBar>
    <ToolButton $menu aria-label="New"><Icon name="new" /><Down /></ToolButton>
    <ToolButton aria-label="Open"><Icon name="open" /></ToolButton>
    <ToolButton aria-label="Save"><Icon name="save" /></ToolButton>
    <ToolButton $menu aria-label="Undo"><Icon name="undo" /><Down /></ToolButton>
    <ToolButton $menu disabled aria-label="Redo"><Icon name="redo" /><Down /></ToolButton>
    <ToolButton aria-label="Home"><Icon name="home" /></ToolButton>
    <ToolButton $menu aria-label="Update"><Icon name="update" /><Down /></ToolButton>
    <ToolButton $menu aria-label="Select"><Icon name="select" /><Down /></ToolButton>
    <ToolButton aria-label="Relationships"><Icon name="links" /></ToolButton>
    <ToolButton aria-label="Material browser"><Icon name="material" /></ToolButton>
    <Combo>
      <ComboSelect aria-label="Material" defaultValue="SA-516-70N">
        <option>SA-516-70N</option>
      </ComboSelect>
      <ComboArrow><Down s={7} /></ComboArrow>
    </Combo>
    <ToolButton aria-label="Appearance browser"><Icon name="wheel" /></ToolButton>
    <Combo $icon>
      <Icon name="sphere" size={13} />
      <ComboSelect $tight aria-label="Appearance" defaultValue="Steel">
        <option>Steel</option>
      </ComboSelect>
      <ComboArrow><Down s={7} /></ComboArrow>
    </Combo>
    <ToolButton aria-label="Adjust"><Icon name="wheelAdd" /></ToolButton>
    <ToolButton aria-label="Clear"><Icon name="wheelDel" /></ToolButton>
    <ToolButton aria-label="Parameters">
      <svg width="16" height="16" viewBox="0 0 16 16">
        <path
          d="M1 15c3 .5 3-2 4-7s1.500-7 4-6.500M3 6h5M8.500 7c2-1.500 2.500 0 3 2.500s1.500 3 3 1.500M15 6.500c-2 0-3 2-4 3.500s-2 2-3 1.500"
          stroke={W}
          strokeWidth="1.600"
          fill="none"
        />
      </svg>
    </ToolButton>
    <ToolButton disabled aria-label="Add"><Icon name="plus" /></ToolButton>
    <Slot $w={14} aria-label="Customize">
      <svg width="8" height="8" viewBox="0 0 8 8">
        <path d="M0 0h8v1.500H0zM0 3.500h8L4 8z" fill="#c3c6cb" />
      </svg>
    </Slot>
    <Title>
      <span>Autodesk Inventor Professional 2022</span>
      <span>Part2</span>
    </Title>
    <Slot $w={14} aria-label="Expand search">
      <svg width="4" height="8" viewBox="0 0 4 8"><path d="M0 0v8l4-4z" fill="#c3c6cb" /></svg>
    </Slot>
    <Search aria-label="Search" placeholder="Search Help & Commands..." />
    <User>
      <svg width="13" height="15" viewBox="0 0 13 15">
        <path d="M4 4a2.500 3.500 0 0 1 5 0c0 2-1 3-1 5l5 3v3H0v-3l5-3c0-2-1-3-1-5z" fill="#5b8def" />
      </svg>
      Doug_Newnh...
      <Down s={5} />
    </User>
    <Slot $w={30} aria-label="Cart">
      <svg width="15" height="13" viewBox="0 0 15 13">
        <path d="M0 0h3l1 2h11l-2 6H5v1h8v1H4L2 1.500H0z" fill={W} />
        <path d="M4 11h2v2H4zM10 11h2v2h-2z" fill={W} />
      </svg>
    </Slot>
    <Divider />
    <Slot $w={44} aria-label="Help">
      <svg width="16" height="16" viewBox="0 0 16 16">
        <circle cx="8" cy="8" r="7.500" fill="#e9ecf2" />
        <path d="M5.500 6.200c0-3.400 5-3.400 5-.4 0 2-2.500 1.800-2.500 4" stroke="#3c62b8" strokeWidth="2" fill="none" />
        <circle cx="8" cy="12.200" r="1.200" fill="#3c62b8" />
      </svg>
      <Down s={5} />
    </Slot>
    <Slot $w={36} $before={27} aria-label="Minimize">
      <svg width="8" height="12" viewBox="0 0 8 12"><path d="M0 9h8v2.500H0z" fill="#fff" /></svg>
    </Slot>
    <Slot $w={16} aria-label="Restore">
      <svg width="13" height="11" viewBox="0 0 13 11">
        <path d="M4 4V1h8v5H9M1 4.500h8V10H1z" stroke="#fff" strokeWidth="1.800" fill="none" />
      </svg>
    </Slot>
  </TitleBar>
);

const RibbonPanel = ({ panel }) => (
  <Panel $w={panel.w}>
    <PanelBody $pad={panel.pad}>
      {(panel.big || []).map((item) => (
        <BigButton key={item.icon} $w={item.w}>
          <BigIcon name={item.icon} />
          {item.text.map((line) => (
            <span key={line}>{line}</span>
          ))}
          {item.menu && <Down s={5} />}
        </BigButton>
      ))}
      {(panel.cols || []).map((col) => (
        <Column key={col.items[0][0]} $w={col.w}>
          {col.items.map(([icon, text, menu]) => (
            <SmallButton key={icon}>
              <Icon name={icon} />
              <SmallLabel>{text}</SmallLabel>
              {menu && <Down s={5} />}
            </SmallButton>
          ))}
        </Column>
      ))}
    </PanelBody>
    <PanelLabel>
      {panel.label}
      {panel.menu && <Down s={8} />}
    </PanelLabel>
  </Panel>
);

const LeftDock = () => (
  <Dock>
    <DockBar>
      <DockTab>Model<Close /></DockTab>
      <Slot $w={23} aria-label="Add panel"><Plus /></Slot>
      <Spacer />
      <Slot $w={24} aria-label="Search">
        <svg width="14" height="14" viewBox="0 0 14 14" fill="none" stroke="#8d939c" strokeWidth="1.700">
          <circle cx="6" cy="6" r="5" />
          <path d="M9.500 9.500L13.500 13.500" />
        </svg>
      </Slot>
      <Slot $w={23} aria-label="Menu"><Menu /></Slot>
    </DockBar>
    <Tree>
      <TreeItem $root>Part2</TreeItem>
      {tree.map(([icon, text]) => (
        <TreeItem key={text} $off={icon === "off"}>
          <svg width="16" height="15" viewBox="0 0 16 16">{treeIcons[icon]}</svg>
          {text}
        </TreeItem>
      ))}
    </Tree>
    <DockBar>
      <DockTab>iLogic<Close /></DockTab>
      <Slot $w={23} aria-label="Add panel"><Plus /></Slot>
      <Spacer />
      <Slot $w={23} aria-label="Menu"><Menu /></Slot>
    </DockBar>
    <FormsPane>
      <FormTabs>
        <FormTab>Rules</FormTab>|
        <FormTab $active>Forms</FormTab>|
        <FormTab>Global Forms</FormTab>|
        <FormTab>External Rules</FormTab>
      </FormTabs>
      <FormButton>Head Configuration</FormButton>
    </FormsPane>
  </Dock>
);

const Model = () => (
  <Scene viewBox="402 143 1998 1155" preserveAspectRatio="xMidYMid slice">
    <defs>
      <linearGradient id="skirt" x1="0" x2="1" y1="0" y2="0">
        <stop offset="0" stopColor="#747474" />
        <stop offset="0.2" stopColor="#686868" />
        <stop offset="0.6" stopColor="#525252" />
        <stop offset="0.85" stopColor="#626265" />
        <stop offset="1" stopColor="#75757d" />
      </linearGradient>
      <linearGradient id="rim" gradientUnits="userSpaceOnUse" x1="900" y1="500" x2="1700" y2="1214">
        <stop offset="0" stopColor="#949494" />
        <stop offset="0.3" stopColor="#808080" />
        <stop offset="0.6" stopColor="#6c6c6c" />
        <stop offset="0.85" stopColor="#525252" />
        <stop offset="1" stopColor="#565656" />
      </linearGradient>
      <linearGradient id="crown" gradientUnits="userSpaceOnUse" x1="760" y1="900" x2="2000" y2="560">
        <stop offset="0" stopColor="#a1a1a1" />
        <stop offset="0.12" stopColor="#a4a4a4" />
        <stop offset="0.28" stopColor="#aeaeae" />
        <stop offset="0.5" stopColor="#a3a3a3" />
        <stop offset="0.75" stopColor="#949494" />
        <stop offset="1" stopColor="#8d8d8d" />
      </linearGradient>
      <filter id="soft" x="-20%" y="-20%" width="140%" height="140%">
        <feGaussianBlur stdDeviation="25" />
      </filter>
      <filter id="edge" x="-20%" y="-20%" width="140%" height="140%">
        <feGaussianBlur stdDeviation="3" />
      </filter>
      <linearGradient id="glintRight" x1="0" x2="1" y1="1" y2="0">
        <stop offset="0" stopColor="#a0a0a0" stopOpacity="0.2" />
        <stop offset="0.5" stopColor="#9c9c9c" />
        <stop offset="1" stopColor="#929292" />
      </linearGradient>
      <clipPath id="dish">
        <path d="M701 790a711 441 0 0 1 1422 0v24a711 400 0 0 1-1422 0z" />
      </clipPath>
    </defs>
    <path d="M701 790a711 441 0 0 1 1422 0v75a711 400 0 0 1-1422 0z" fill="url(#skirt)" />
    <g clipPath="url(#dish)">
      <path d="M701 790a711 441 0 0 1 1422 0v24a711 400 0 0 1-1422 0z" fill="url(#rim)" />
      <ellipse cx="1400" cy="730" rx="678" ry="422" fill="url(#crown)" filter="url(#soft)" />
      <path d="M840 810l150 5 120-90 50 20-230 240-60-50z" fill="#999" opacity="0.55" filter="url(#soft)" />
      <g filter="url(#edge)">
        <path d="M839 789l40-67 60-80h220l-67 92-58 53-46 20-70-14z" fill="#b4b4b4" />
        <path d="M809 887l45 32 43 0-3 36 21 30-47-16-20-16z" fill="#b2b2b2" />
      </g>
      <path d="M1987 930l-39 57-12 10-51 10 25-31z" fill="url(#glintRight)" />
      <path d="M1569 1130l112-28 30 7-43 15-77 16z" fill="#989898" opacity="0.85" />
    </g>

    <g fill="#7a7d84" stroke="#6a6d74">
      <path d="M2364 188l35 16-35 16-34-16z" fill="#84878d" />
      <path d="M2330 204l34 16v43l-30-23z" fill="#777a81" />
      <path d="M2399 204l-35 16v43l31-23z" fill="#6e7178" />
    </g>
    <g fill="#555960" fontFamily="Roboto, sans-serif" fontSize="9">
      <text x="2355" y="206">TOP</text>
      <text transform="translate(2335 229) rotate(25)">FRONT</text>
      <text transform="translate(2369 241) rotate(-25)">RIGHT</text>
    </g>

    <g strokeWidth="1.500">
      <path d="M451 1236v14" stroke="#1d8a2a" />
      <path d="M451 1250l12 6" stroke="#7a1414" />
      <path d="M451 1250l-12 6" stroke="#141480" />
      <path d="M451 1224l6 11c-3 2-9 2-12 0z" fill="#0f7d1a" />
      <path d="M463 1250l9 8-9 3c-3-3-3-8 0-11z" fill="#d01818" />
      <path d="M439 1250l3 11-10 0c-1-5 3-9 7-11z" fill="#1212b4" />
    </g>
    <g fontFamily="Roboto, sans-serif" fontSize="12" textAnchor="middle">
      <text x="451" y="1224" fill="#27a838">Y</text>
      <text x="476" y="1267" fill="#c42323">X</text>
      <text x="427" y="1267" fill="#1c1cc4">Z</text>
    </g>

    <path d="M2371 156h8v2.500h-8zM2390 149h10v2h-8v6h8v2h-10z" fill="#cdd1d8" />
    <rect x="2391" y="281" width="20" height="214" rx="3" fill="#5c646d" />
    <g fill="#b8bdc3">
      <circle cx="2402" cy="309" r="6" />
      <path d="M2396 354l4 3v3l-5-4zM2396 376h4v15h-4zM2396 461h4v13h-4z" />
    </g>
  </Scene>
);

const HeadDialog = () => {
  const partId = useRef(null);

  useEffect(() => {
    partId.current.focus();
    partId.current.select();
  }, []);

  return (
    <Dialog onSubmit={(e) => e.preventDefault()}>
      <DialogTitle>
        Head Configuration
        <button type="button" aria-label="Close dialog"><Close s={11} /></button>
      </DialogTitle>
      <DialogBody>
        <Field $label={53}>
          <label htmlFor="headType">Head Type</label>
          <Choice>
            <ChoiceSelect id="headType"><option>FLANGED &amp; DISHED</option></ChoiceSelect>
            <ComboArrow><Down c="#e6e8ec" /></ComboArrow>
          </Choice>
        </Field>
        <Group>
          <GroupHead type="button"><Chevron />Head Parameters</GroupHead>
          <GroupBody>
            {[
              ["headSf", "Head SF", "1.5 in"],
              ["vesselOd", "Vessel OD", "36 in"],
              ["vesselThk", "Vessel Thickness", "0.625 in"],
              ["headMin", "Head Minimum Thickness (MTAF)", "0.469"],
            ].map(([id, label, value]) => (
              <Field key={id} $label={154}>
                <label htmlFor={id}>{label}</label>
                <TextInput id={id} defaultValue={value} />
              </Field>
            ))}
          </GroupBody>
        </Group>
        <Group>
          <GroupHead type="button"><Chevron />Pipe Cap Parameters</GroupHead>
          <GroupBody>
            {[
              ["nomDia", "Pipe Cap Nom Dia", "12"],
              ["schedule", "Schedule", "STD"],
            ].map(([id, label, value]) => (
              <Field key={id} $label={84}>
                <label htmlFor={id}>{label}</label>
                <Choice>
                  <ChoiceSelect id={id}><option>{value}</option></ChoiceSelect>
                  <ComboArrow><Down c="#e6e8ec" /></ComboArrow>
                </Choice>
              </Field>
            ))}
          </GroupBody>
        </Group>
        <Field $label={53}>
          <label htmlFor="partName">Part Name</label>
          <TextInput id="partName" defaultValue="HEAD" />
        </Field>
        <Field $label={53}>
          <label htmlFor="description">Description</label>
          <TextInput
            id="description"
            $soft
            defaultValue="F&D HEAD 36 OD x 5/8 NOM (0.469 MTAF) x 1 1/2 SF, B16.9"
          />
        </Field>
        <Field $label={53}>
          <label htmlFor="partId">M1 Part ID</label>
          <TextInput id="partId" ref={partId} $soft $focus defaultValue="DISH-0.625NOMX36OD-1.5SF" />
        </Field>
        <Buttons>
          <DialogButton type="button">Close</DialogButton>
          <DialogButton type="button" disabled>Cancel</DialogButton>
          <DialogButton type="button" disabled>Apply</DialogButton>
        </Buttons>
      </DialogBody>
      <Pointer width="12" height="18" viewBox="0 0 12 18">
        <path d="M0 0v14l3.500-3 2.500 6 3-1.200L6.500 10H12z" fill="#fff" />
      </Pointer>
      <Grip width="7" height="7" viewBox="0 0 7 7">
        <path d="M1 1h2v2H1zM4 1h2v2H4zM1 4h2v2H1zM4 4h2v2H4z" fill="#7d8592" />
      </Grip>
    </Dialog>
  );
};

const App = () => {
  return (
    <Screen>
      <GlobalStyle />
      <Window>
        <Header />
        <Tabs>
          <FileTab>File</FileTab>
          {tabs.map((tab, i) => (
            <Tab key={tab} $active={i === 0}>{tab}</Tab>
          ))}
          <Slot $w={60} aria-label="Ribbon display">
            <svg width="14" height="9" viewBox="0 0 14 9">
              <rect width="14" height="9" rx="2" fill="#d6d8db" />
              <path d="M4.500 6L7 3l2.500 3z" fill="#2a3240" />
            </svg>
            <Down s={5} />
          </Slot>
        </Tabs>
        <Ribbon>
          {panels.map((panel) => (
            <RibbonPanel key={panel.label} panel={panel} />
          ))}
          <PanelBody $pad={4}>
            <Slot $w={32} aria-label="More">
              <svg width="16" height="32" viewBox="0 0 16 32">
                <circle cx="8" cy="21" r="7.500" fill="#d3d5d8" />
                <path d="M5 19h6l-3 5z" fill="#3a3a3a" />
              </svg>
              <Down s={5} />
            </Slot>
          </PanelBody>
        </Ribbon>
        <Main>
          <LeftDock />
          <Work>
            <Viewport>
              <Model />
              <HeadDialog />
            </Viewport>
            <DocTabs>
              <HomeTab aria-label="Home"><Icon name="home" size={15} /></HomeTab>
              <DocTab>Part2<Close s={8} c="#9aa0a8" /></DocTab>
            </DocTabs>
          </Work>
        </Main>
        <StatusBar>
          <StatusText>Ready</StatusText>
          <StatusCount>1</StatusCount>
        </StatusBar>
        <Taskbar>
          <TaskSearch />
          <TaskActive />
        </Taskbar>
      </Window>
    </Screen>
  );
};

export default App;
